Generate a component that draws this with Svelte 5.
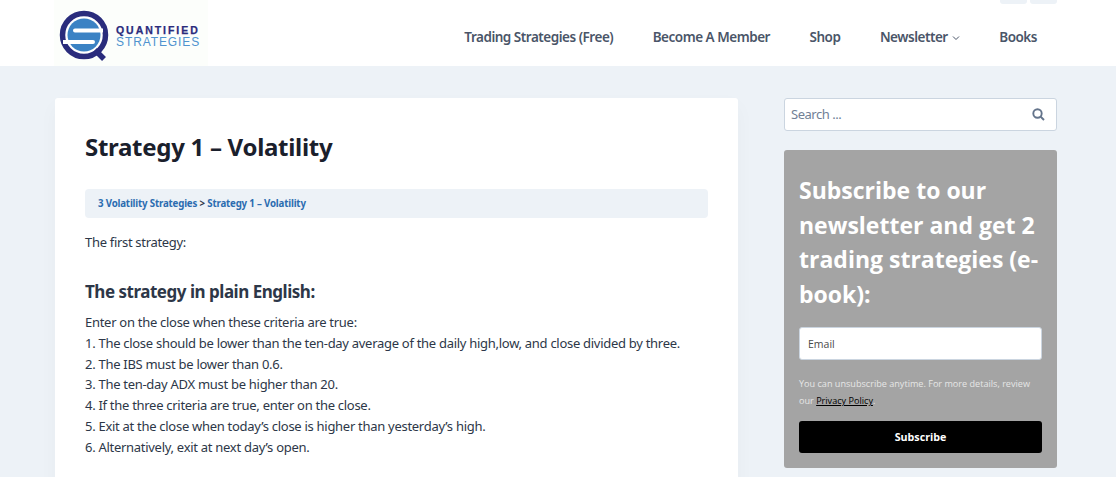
<script lang="ts">
  const nav = [
    { label: 'Trading Strategies (Free)' },
    { label: 'Become A Member' },
    { label: 'Shop' },
    { label: 'Newsletter', caret: true },
    { label: 'Books' },
  ];

  const steps = [
    'Enter on the close when these criteria are true:',
    '1. The close should be lower than the ten-day average of the daily high,low, and close divided by three.',
    '2. The IBS must be lower than 0.6.',
    '3. The ten-day ADX must be higher than 20.',
    '4. If the three criteria are true, enter on the close.',
    '5. Exit at the close when today’s close is higher than yesterday’s high.',
    '6. Alternatively, exit at next day’s open.',
  ];
</script>

<div class="page">
  <header class="site-header">
    <a class="logo" href="#home" aria-label="Quantified Strategies">
      <svg width="56" height="54" viewBox="0 0 56 54" aria-hidden="true">
        <circle cx="25" cy="25" r="21.5" fill="#fff" stroke="#2a2c7c" stroke-width="5.5" />
        <circle cx="25" cy="25" r="16.5" fill="#3b82c4" />
        <path d="M16 18.5H44V22.5H16a2 2 0 0 1 0-4zM4 30H34a2 2 0 0 1 0 4H4z" fill="#fff" />
        <path d="M36 40l9 9" stroke="#2a2c7c" stroke-width="5.5" fill="none" />
      </svg>
      <span class="logo-text">
        <span class="logo-top">QUANTIFIED</span>
        <span class="logo-bottom">STRATEGIES</span>
      </span>
    </a>
    <nav class="nav">
      {#each nav as item}
        <a href="#nav">
          {item.label}
          {#if item.caret}
            <svg class="caret" width="8" height="8" viewBox="0 0 8 8" aria-hidden="true">
              <path d="M1 2.5l3 3 3-3" fill="none" stroke="currentColor" stroke-width="1" />
            </svg>
          {/if}
        </a>
      {/each}
    </nav>
    <div class="top-tabs">
      <span></span>
      <span></span>
    </div>
  </header>

  <div class="content">
    <main class="card">
      <h1>Strategy 1 – Volatility</h1>
      <div class="crumbs"><a href="#c">3 Volatility Strategies</a> &gt; <a href="#c">Strategy 1 – Volatility</a></div>
      <p class="intro">The first strategy:</p>
      <h2>The strategy in plain English:</h2>
      <p class="steps">
        {#each steps as step}
          {step}<br />
        {/each}
      </p>
    </main>

    <aside class="sidebar">
      <div class="search">
        <span>Search ...</span>
        <svg width="13" height="13" viewBox="0 0 13 13" aria-hidden="true">
          <circle cx="5.5" cy="5.5" r="4.2" fill="none" stroke="currentColor" stroke-width="1.9" />
          <path d="M8.6 8.6L12 12" stroke="currentColor" stroke-width="2" fill="none" />
        </svg>
      </div>
      <section class="subscribe">
        <h3>Subscribe to our newsletter and get 2 trading strategies (e-book):</h3>
        <div class="email">Email</div>
        <p class="note">You can unsubscribe anytime. For more details, review our <a href="#p">Privacy Policy</a>.</p>
        <button type="button">Subscribe</button>
      </section>
    </aside>
  </div>
</div>

<style>
  :global(body) {
    margin: 0;
    background: #edf2f7;
    overflow: hidden;
  }
  .page {
    height: 477px;
    overflow: hidden;
    font-family: "Noto Sans", "Open Sans", sans-serif;
    letter-spacing: -0.03em;
    color: #2d3748;
  }
  .site-header {
    position: relative;
    height: 66px;
    background: #fff;
    display: flex;
    justify-content: space-between;
    align-items: stretch;
    padding: 0 59px 0 54px;
  }
  .logo {
    width: 154px;
    background: #fcfefb;
    display: flex;
    align-items: flex-start;
    padding: 10px 0 0 5px;
    box-sizing: border-box;
    text-decoration: none;
  }
  .logo-text {
    display: flex;
    flex-direction: column;
    margin: 15px 0 0 1px;
    font-family: "Liberation Sans", sans-serif;
  }
  .logo-top {
    font-size: 10.5px;
    line-height: 11px;
    font-weight: 700;
    color: #2a2c7c;
    letter-spacing: 1.95px;
    -webkit-text-stroke: 0.25px #2a2c7c;
  }
  .logo-bottom {
    font-size: 12px;
    line-height: 12px;
    color: #4f93cf;
    letter-spacing: 0.9px;
  }
  .nav {
    display: flex;
    align-items: center;
    gap: 39.5px;
    padding: 7px 20px 0 0;
  }
  .nav a {
    font-size: 13.5px;
    font-weight: 600;
    color: #4a5568;
    text-decoration: none;
    white-space: nowrap;
  }
  .caret {
    margin-left: 1px;
  }
  .top-tabs {
    position: absolute;
    top: 0;
    left: 1000px;
    display: flex;
    gap: 3px;
  }
  .top-tabs span {
    width: 27px;
    height: 4px;
    background: #edf2f7;
    border-radius: 0 0 3px 3px;
  }
  .content {
    display: grid;
    grid-template-columns: 683px 273px;
    gap: 46px;
    padding: 32px 0 0 55px;
  }
  .card {
    background: #fff;
    border-radius: 3px;
    padding: 31px 30px 32px;
    height: 400px;
    box-sizing: border-box;
    box-shadow: 0 8px 20px rgba(0, 0, 0, 0.03);
  }
  h1 {
    margin: 0 0 24px;
    font-size: 24px;
    line-height: 36px;
    font-weight: 700;
    letter-spacing: -0.012em;
    color: #1a202c;
  }
  .crumbs {
    background: #edf2f7;
    border-radius: 4px;
    height: 29px;
    line-height: 29px;
    padding: 0 13px;
    font-size: 9.7px;
    font-weight: 700;
    letter-spacing: -0.018em;
    color: #2d3748;
  }
  .crumbs a {
    color: #2b6cb0;
    text-decoration: none;
  }
  .intro {
    margin: 14px 0 0;
    font-size: 13px;
    line-height: 21px;
    letter-spacing: -0.024em;
  }
  h2 {
    margin: 26px 0 8px;
    font-size: 17px;
    line-height: 25px;
    font-weight: 700;
    color: #2d3748;
  }
  .steps {
    margin: 0;
    font-size: 13px;
    line-height: 20.8px;
    letter-spacing: -0.022em;
  }
  .sidebar {
    display: flex;
    flex-direction: column;
    gap: 19px;
  }
  .search {
    height: 33px;
    box-sizing: border-box;
    background: #fff;
    border: 1px solid #cbd5e0;
    border-radius: 3px;
    display: flex;
    align-items: center;
    justify-content: space-between;
    padding: 0 11px 2px 6px;
    font-size: 13px;
    color: #718096;
  }
  .search svg {
    color: #64748b;
    margin-top: 2px;
  }
  .subscribe {
    background: #a4a4a4;
    border-radius: 3px;
    padding: 23px 15px 15px;
    height: 318px;
    box-sizing: border-box;
    font-family: "Open Sans", sans-serif;
    letter-spacing: 0;
  }
  h3 {
    margin: 0 0 16px;
    font-size: 23px;
    line-height: 34.6px;
    font-weight: 700;
    color: #fff;
  }
  .email {
    height: 33px;
    box-sizing: border-box;
    line-height: 32px;
    background: #fff;
    border: 1px solid #cbd5e0;
    border-radius: 3px;
    padding: 0 8px;
    font-size: 10.5px;
    color: #4a4a4a;
  }
  .note {
    margin: 15px 0 12px;
    font-size: 9.1px;
    line-height: 17px;
    color: #e6e6e6;
  }
  .note a {
    color: #000;
  }
  button {
    display: block;
    width: 100%;
    height: 32px;
    border: 0;
    border-radius: 3px;
    background: #000;
    color: #fff;
    font-family: inherit;
    font-size: 10.7px;
    font-weight: 700;
  }
</style>
